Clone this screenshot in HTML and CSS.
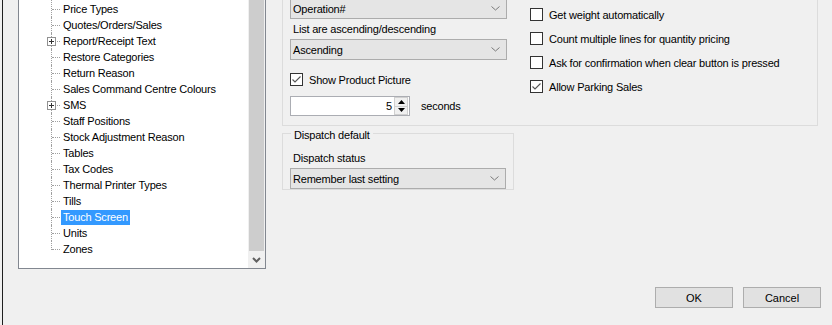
FILE: index.html
```html
<!DOCTYPE html>
<html lang="en">
<head>
  <meta charset="UTF-8">
  <title>Touch Screen Options</title>
  <link rel="stylesheet" href="styles.css">
</head>
<body>
  <div class="window">
    <div class="main">
      <!-- options tree -->
      <div class="tree">
        <ul class="tree-list">
          <li><span class="branch"><span class="stub"></span></span><span class="node">Price Types</span></li>
          <li><span class="branch"><span class="stub"></span></span><span class="node">Quotes/Orders/Sales</span></li>
          <li><span class="branch"><span class="stub"></span><span class="plus"></span></span><span class="node">Report/Receipt Text</span></li>
          <li><span class="branch"><span class="stub"></span></span><span class="node">Restore Categories</span></li>
          <li><span class="branch"><span class="stub"></span></span><span class="node">Return Reason</span></li>
          <li><span class="branch"><span class="stub"></span></span><span class="node">Sales Command Centre Colours</span></li>
          <li><span class="branch"><span class="stub"></span><span class="plus"></span></span><span class="node">SMS</span></li>
          <li><span class="branch"><span class="stub"></span></span><span class="node">Staff Positions</span></li>
          <li><span class="branch"><span class="stub"></span></span><span class="node">Stock Adjustment Reason</span></li>
          <li><span class="branch"><span class="stub"></span></span><span class="node">Tables</span></li>
          <li><span class="branch"><span class="stub"></span></span><span class="node">Tax Codes</span></li>
          <li><span class="branch"><span class="stub"></span></span><span class="node">Thermal Printer Types</span></li>
          <li><span class="branch"><span class="stub"></span></span><span class="node">Tills</span></li>
          <li><span class="branch"><span class="stub"></span></span><span class="node selected">Touch Screen</span></li>
          <li><span class="branch"><span class="stub"></span></span><span class="node">Units</span></li>
          <li class="last"><span class="branch"><span class="stub"></span></span><span class="node">Zones</span></li>
        </ul>
        <div class="scrollbar">
          <div class="thumb"></div>
          <div class="scroll-arrow">
            <svg width="9" height="6" viewBox="0 0 9 6"><path d="M1 1 L4.5 4.5 L8 1" fill="none" stroke="#606060" stroke-width="2"/></svg>
          </div>
        </div>
      </div>

      <!-- touch screen settings -->
      <div class="settings">
        <div class="group group-top">
          <div class="col col-left">
            <div class="combo combo-first">
              <span>Operation#</span>
              <svg width="9" height="5" viewBox="0 0 9 5"><path d="M0.5 0.5 L4.5 4 L8.5 0.5" fill="none" stroke="#7a7a7a"/></svg>
            </div>
            <div class="label">List are ascending/descending</div>
            <div class="combo">
              <span>Ascending</span>
              <svg width="9" height="5" viewBox="0 0 9 5"><path d="M0.5 0.5 L4.5 4 L8.5 0.5" fill="none" stroke="#7a7a7a"/></svg>
            </div>
            <div class="check check-picture">
              <span class="box"><svg width="11" height="11" viewBox="0 0 11 11"><path d="M1.5 5.5 L4 8 L9.5 2.5" fill="none" stroke="#555" stroke-width="1.1"/></svg></span>
              <span>Show Product Picture</span>
            </div>
            <div class="spin-row">
              <div class="spin">
                <span class="spin-value">5</span>
                <div class="spin-btns">
                  <span class="spin-up"><svg width="7" height="4" viewBox="0 0 7 4"><path d="M0 4 L3.5 0 L7 4 Z" fill="#000"/></svg></span>
                  <span class="spin-down"><svg width="7" height="4" viewBox="0 0 7 4"><path d="M0 0 L3.5 4 L7 0 Z" fill="#000"/></svg></span>
                </div>
              </div>
              <span class="spin-unit">seconds</span>
            </div>
          </div>
          <div class="col col-right">
            <div class="check"><span class="box"></span><span>Get weight automatically</span></div>
            <div class="check"><span class="box"></span><span>Count multiple lines for quantity pricing</span></div>
            <div class="check"><span class="box"></span><span>Ask for confirmation when clear button is pressed</span></div>
            <div class="check">
              <span class="box"><svg width="11" height="11" viewBox="0 0 11 11"><path d="M1.5 5.5 L4 8 L9.5 2.5" fill="none" stroke="#555" stroke-width="1.1"/></svg></span>
              <span>Allow Parking Sales</span>
            </div>
          </div>
        </div>

        <div class="group dispatch">
          <div class="legend">Dispatch default</div>
          <div class="label dispatch-label">Dispatch status</div>
          <div class="combo">
            <span>Remember last setting</span>
            <svg width="9" height="5" viewBox="0 0 9 5"><path d="M0.5 0.5 L4.5 4 L8.5 0.5" fill="none" stroke="#7a7a7a"/></svg>
          </div>
        </div>
      </div>
    </div>

    <div class="footer">
      <button class="btn">OK</button>
      <button class="btn">Cancel</button>
    </div>
  </div>
</body>
</html>
```

FILE: styles.css
```css
html, body {
  margin: 0;
  padding: 0;
}
body {
  background: #f0f0f0;
  font-family: "Liberation Sans", Arial, sans-serif;
  font-size: 11px;
  letter-spacing: -0.2px;
  color: #000;
  width: 832px;
  height: 325px;
  overflow: hidden;
  padding-left: 2px;
  box-sizing: border-box;
}
.window {
  border-left: 1px solid #1f1f1f;
  height: 325px;
  display: flex;
  flex-direction: column;
}
.main {
  display: flex;
  height: 269px;
}

/* tree */
.tree {
  margin-left: 15px;
  width: 248px;
  height: 269px;
  box-sizing: border-box;
  background: #fff;
  border: 1px solid #828790;
  border-top: none;
  display: flex;
}
.tree-list {
  flex: 1;
  margin: 0;
  padding: 0 0 0 32px;
  list-style: none;
}
.tree-list li {
  display: flex;
  height: 16px;
}
.tree-list li:first-child {
  height: 17px;
}
.tree-list li:first-child .branch {
  height: 17px;
}
.tree-list li:first-child .stub {
  margin-top: 9px;
}
.tree-list li:first-child .node {
  padding-top: 1px;
}
.branch {
  position: relative;
  width: 10px;
  height: 16px;
  border-left: 1px dotted #a0a0a0;
  box-sizing: border-box;
}
.tree-list li.last .branch {
  height: 9px;
}
.stub {
  display: block;
  margin-top: 8px;
  width: 8px;
  border-top: 1px dotted #a0a0a0;
}
.plus {
  position: absolute;
  left: -5px;
  top: 4px;
  width: 9px;
  height: 9px;
  box-sizing: border-box;
  border: 1px solid #919191;
  background: #fff linear-gradient(#333, #333) center / 5px 1px no-repeat;
}
.plus::after {
  content: "";
  display: block;
  margin: 1px auto 0;
  width: 1px;
  height: 5px;
  background: #333;
}
.node {
  line-height: 16px;
  padding: 0 2px;
  white-space: nowrap;
}
.node.selected {
  background: #3399ff;
  color: #fff;
  line-height: 15px;
  height: 15px;
  margin-top: 1px;
}
.scrollbar {
  width: 17px;
  display: flex;
  flex-direction: column;
  background: #f0f0f0;
}
.thumb {
  flex: 1;
  margin: 0 1px;
  background: #cdcdcd;
}
.scroll-arrow {
  height: 17px;
  display: flex;
  align-items: center;
  justify-content: center;
}

/* settings */
.settings {
  margin-left: 16px;
}
.group {
  border: 1px solid #dcdcdc;
  box-sizing: border-box;
}
.group-top {
  width: 536px;
  height: 126px;
  border-top: none;
  display: flex;
  padding-left: 7px;
}
.col-left {
  width: 217px;
}
.col-right {
  margin-left: 23px;
  padding-top: 8px;
  display: flex;
  flex-direction: column;
  gap: 11px;
}
.combo {
  height: 21px;
  box-sizing: border-box;
  border: 1px solid #acacac;
  background: #e5e5e5;
  display: flex;
  align-items: center;
  justify-content: space-between;
  padding: 0 6px 0 2px;
}
.combo-first {
  margin-top: -2px;
}
.label {
  line-height: 20px;
  padding-left: 3px;
}
.check {
  display: flex;
  align-items: center;
  gap: 6px;
  height: 13px;
}
.box {
  width: 13px;
  height: 13px;
  box-sizing: border-box;
  border: 1px solid #333;
  background: #fff;
  display: flex;
  align-items: center;
  justify-content: center;
}
.check-picture {
  margin-top: 13px;
}
.spin-row {
  display: flex;
  align-items: center;
  gap: 11px;
  margin-top: 10px;
}
.spin {
  width: 120px;
  height: 20px;
  box-sizing: border-box;
  border: 1px solid #abadb3;
  background: #fff;
  display: flex;
  justify-content: flex-end;
}
.spin-value {
  line-height: 18px;
  margin-right: 2px;
}
.spin-btns {
  width: 14px;
  margin: 0 1px 0 0;
  display: flex;
  flex-direction: column;
}
.spin-btns span {
  flex: 1;
  display: flex;
  align-items: center;
  justify-content: center;
  border: 1px solid #d0d0d0;
  background: #f0f0f0;
}
.spin-up {
  border-bottom: none !important;
}

/* dispatch */
.dispatch {
  margin-top: 7px;
  width: 232px;
  height: 57px;
  padding: 0 7px;
}
.legend {
  width: fit-content;
  margin: -6px 0 0 1px;
  padding: 0 3px;
  background: #f0f0f0;
  line-height: 14px;
}
.dispatch-label {
  line-height: 13px;
  margin-top: 10px;
  margin-bottom: 3px;
}

/* buttons */
.footer {
  display: flex;
  justify-content: flex-end;
  gap: 10px;
  margin-top: 18px;
  padding-right: 11px;
}
.btn {
  width: 78px;
  height: 21px;
  padding: 0;
  border: 1px solid #adadad;
  background: #e1e1e1;
  font-family: "Liberation Sans", Arial, sans-serif;
  font-size: 11px;
  color: #000;
}
```
